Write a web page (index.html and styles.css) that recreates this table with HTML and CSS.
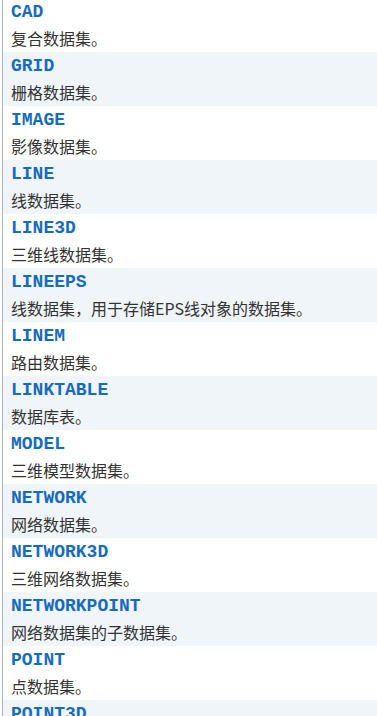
FILE: index.html
```html
<!DOCTYPE html>
<html lang="zh-CN">
<head>
<meta charset="utf-8">
<title>数据集类型</title>
<link rel="stylesheet" href="styles.css">
</head>
<body>
<div class="list">
  <div class="row"><div class="name">CAD</div><div class="desc">复合数据集。</div></div>
  <div class="row"><div class="name">GRID</div><div class="desc">栅格数据集。</div></div>
  <div class="row"><div class="name">IMAGE</div><div class="desc">影像数据集。</div></div>
  <div class="row"><div class="name">LINE</div><div class="desc">线数据集。</div></div>
  <div class="row"><div class="name">LINE3D</div><div class="desc">三维线数据集。</div></div>
  <div class="row"><div class="name">LINEEPS</div><div class="desc">线数据集，用于存储EPS线对象的数据集。</div></div>
  <div class="row"><div class="name">LINEM</div><div class="desc">路由数据集。</div></div>
  <div class="row"><div class="name">LINKTABLE</div><div class="desc">数据库表。</div></div>
  <div class="row"><div class="name">MODEL</div><div class="desc">三维模型数据集。</div></div>
  <div class="row"><div class="name">NETWORK</div><div class="desc">网络数据集。</div></div>
  <div class="row"><div class="name">NETWORK3D</div><div class="desc">三维网络数据集。</div></div>
  <div class="row"><div class="name">NETWORKPOINT</div><div class="desc">网络数据集的子数据集。</div></div>
  <div class="row"><div class="name">POINT</div><div class="desc">点数据集。</div></div>
  <div class="row"><div class="name">POINT3D</div><div class="desc">三维点数据集。</div></div>
</div>
</body>
</html>
```
FILE: styles.css
```css
html, body {
  margin: 0;
  padding: 0;
  background: #ffffff;
}
body {
  overflow: hidden;
}
.list {
  margin-top: -2px;
  margin-left: 2px;
  border-left: 1px solid #a9b3c4;
}
.row {
  height: 54px;
  box-sizing: border-box;
  padding: 2px 8px 0 8px;
}
.row:nth-child(even) {
  background: #f0f5fa;
}
.name {
  font-family: "Liberation Mono", "Courier New", monospace;
  font-weight: bold;
  font-size: 18px;
  line-height: 24px;
  color: #176bbd;
}
.desc {
  font-family: "Noto Sans CJK SC", "Noto Sans", sans-serif;
  font-size: 16px;
  line-height: 28px;
  color: #333333;
  white-space: nowrap;
}
```
